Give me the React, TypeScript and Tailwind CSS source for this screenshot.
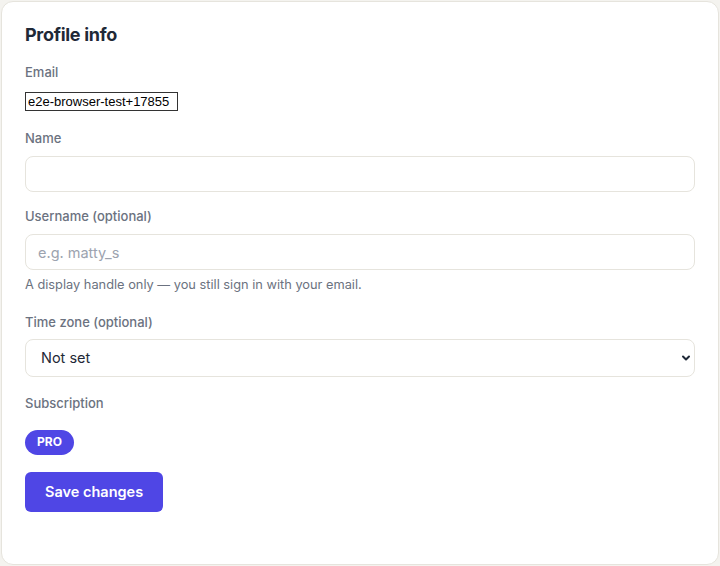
import { ChevronDown } from "lucide-react";

const label = "block text-[13px] leading-5 text-[#6b7280] font-medium";
const field =
  "w-full rounded-lg border border-[#e6e4dd] bg-white px-3 text-[14.5px] text-[#1f2937] outline-none placeholder:text-[#9ca3af]";

export default function App() {
  return (
    <div className="min-h-[566px] w-[720px] bg-[#f4f3ef] p-px" style={{ fontFamily: "Inter, 'Noto Sans', sans-serif" }}>
      <div className="flex h-[564px] flex-col rounded-xl border border-[#e6e4dd] bg-white px-[23px] pt-[23px]">
        <h2 className="text-[18px] leading-5 font-bold tracking-[-0.3px] text-[#1f2937]">Profile info</h2>

        <label className={`${label} mt-[17px]`}>Email</label>
        <input
          readOnly
          value="e2e-browser-test+17855"
          className="mt-[10px] h-[19px] w-[153px] border border-[#333] px-[2px] text-[13px] text-black outline-none"
          style={{ fontFamily: "'Liberation Sans', Arial, sans-serif" }}
        />

        <label className={`${label} mt-[17px]`}>Name</label>
        <input className={`${field} mt-2 h-9`} />

        <label className={`${label} mt-[14px]`}>Username (optional)</label>
        <input placeholder="e.g. matty_s" className={`${field} mt-2 h-9`} />
        <p className="mt-[6px] text-[12.8px] leading-[18px] text-[#6b7280]">
          A display handle only — you still sign in with your email.
        </p>

        <label className={`${label} mt-[18px]`}>Time zone (optional)</label>
        <div className="relative mt-[7px]">
          <div className={`${field} flex h-[38px] items-center pl-[15px]`}>Not set</div>
          <ChevronDown className="absolute top-[13px] right-[3px] h-3 w-3 text-[#1f2937]" strokeWidth={4} />
        </div>

        <label className={`${label} mt-[16px]`}>Subscription</label>
        <div className="mt-[15px]">
          <span className="inline-flex h-[25px] items-center rounded-full bg-[#4f46e5] px-[12px] text-[12px] font-bold text-white">
            PRO
          </span>
        </div>

        <div className="mt-[17px]">
          <button className="h-10 rounded-md bg-[#4f46e5] px-[20px] text-[14.5px] font-semibold text-white">
            Save changes
          </button>
        </div>
      </div>
    </div>
  );
}
